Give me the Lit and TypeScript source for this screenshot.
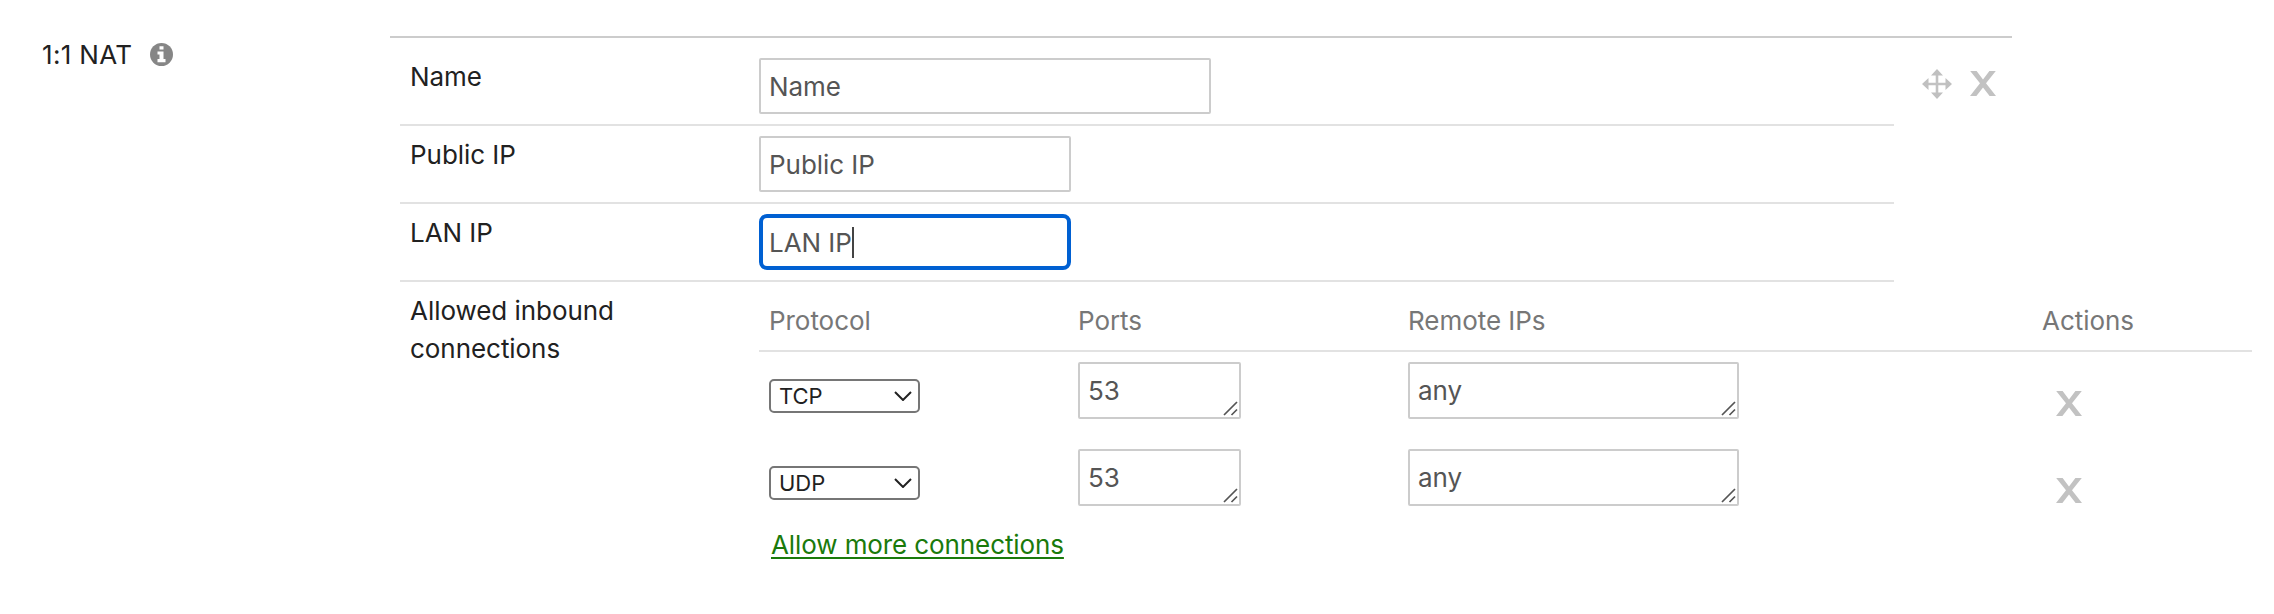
import { LitElement, html, css } from "lit";
import { customElement } from "lit/decorators.js";

const crossIcon = html`<svg class="cross" viewBox="0 0 26 27" width="26" height="27">
  <path d="M.2 1H6.600L13 9.600L19.400 1H25.800L16 13.300L26 26H19.600L13 17.400L6.400 26H0L10 13.300Z" fill="#c2c2c2" />
</svg>`;

const moveIcon = html`<svg class="move" viewBox="0 0 30 30" width="30" height="30">
  <path d="M15 3V27M3 15H27" stroke="#c2c2c2" stroke-width="2.600" fill="none" />
  <path d="M15 0L21 6.500H9ZM15 30L21 23.500H9ZM0 15L6.500 9V21ZM30 15L23.500 9V21Z" fill="#c0c0c0" />
</svg>`;

const grip = html`<svg class="grip" viewBox="0 0 16 16" width="16" height="16">
  <path d="M1 15L14 2M8.500 15L14 9.500" stroke="#555" stroke-width="1.700" fill="none" />
</svg>`;

@customElement("app-root")
export class AppRoot extends LitElement {
  static styles = css`
    :host {
      display: block;
      height: 614px;
      background: #fff;
      color: #212121;
      font: 26px/38px Inter, "Liberation Sans", sans-serif;
      letter-spacing: -0.05px;
      overflow: hidden;
    }
    * { box-sizing: border-box; }
    .page { display: flex; align-items: flex-start; padding-top: 36px; }
    .title {
      width: 390px;
      padding: 0 0 0 42px;
      display: flex;
      align-items: center;
      gap: 17px;
      letter-spacing: 0.35px;
    }
    .info { display: block; margin-top: -1px; }
    .rules { width: 1862px; }
    .top { width: 1622px; border-top: 2px solid #ccc; display: flex; }
    .fields { width: 1504px; padding-left: 10px; }
    .row {
      display: flex;
      height: 78px;
      border-bottom: 2px solid #e2e2e2;
      padding-left: 10px;
      align-items: flex-start;
    }
    .row.first { height: 88px; padding-top: 10px; }
    .label { width: 349px; padding-top: 10px; }
    .box {
      margin-top: 10px;
      height: 56px;
      border: 2px solid #ccc;
      border-radius: 2px;
      padding: 8px 8px 0;
      background: #fff;
      color: #555;
      white-space: nowrap;
      display: flex;
    }
    .wide { width: 452px; }
    .mid { width: 312px; }
    .focus { border: 4px solid #0060d2; border-radius: 8px; padding: 6px 6px 0; }
    .caret { width: 2px; height: 31px; margin-top: 3px; background: #444; }
    .tools { display: flex; gap: 18px; padding: 31px 0 0 28px; align-items: flex-start; }
    .cross, .move, .grip, .chev { display: block; }
    .tools .cross { margin-top: 1px; }
    .bottom { display: flex; padding-left: 20px; }
    .table { width: 1493px; }
    .line { display: grid; grid-template-columns: 309px 330px 634px 1fr; padding-left: 10px; }
    .head { height: 70px; padding-top: 20px; border-bottom: 2px solid #e2e2e2; color: #777; }
    .item { height: 87px; padding-top: 10px; }
    .select {
      width: 151px;
      height: 34px;
      margin-top: 17px;
      border: 2px solid #767676;
      border-radius: 5px;
      background: #fff;
      font-size: 22px;
      line-height: 30px;
      padding: 0 6px 0 8px;
      display: flex;
      justify-content: space-between;
      align-items: center;
    }
    .area { margin-top: 0; height: 57px; justify-content: space-between; align-items: flex-start; padding-right: 0; }
    .grip { align-self: flex-end; margin-bottom: 1px; }
    .ports { width: 163px; }
    .remote { width: 331px; }
    .item > .cross { margin: 28px 0 0 14px; }
    .more {
      display: inline-block;
      margin: 0 0 0 12px;
      color: #1a7a0b;
      letter-spacing: -0.1px;
      text-decoration: underline;
      text-decoration-thickness: 2px;
      text-underline-offset: 3px;
      text-decoration-skip-ink: none;
    }
  `;

  private item(protocol: string) {
    return html`<div class="line item">
      <div class="select">
        <span>${protocol}</span>
        <svg class="chev" viewBox="0 0 18 10" width="18" height="10">
          <path d="M1 1L9 9L17 1" fill="none" stroke="#222" stroke-width="2" />
        </svg>
      </div>
      <div class="box area ports"><span>53</span>${grip}</div>
      <div class="box area remote"><span>any</span>${grip}</div>
      ${crossIcon}
    </div>`;
  }

  render() {
    return html`<div class="page">
      <div class="title">
        <span>1:1 NAT</span>
        <svg class="info" viewBox="0 0 23 23" width="23" height="23">
          <circle cx="11.500" cy="11.500" r="11.500" fill="#868686" />
          <path d="M9.500 3.200H13.500V6.500H9.500ZM7.500 8.500H13.500V16H15.500V19.200H7.500V16H9.500V11.500H7.500Z" fill="#fff" />
        </svg>
      </div>
      <div class="rules">
        <div class="top">
          <div class="fields">
            <div class="row first"><div class="label">Name</div><div class="box wide">Name</div></div>
            <div class="row"><div class="label">Public IP</div><div class="box mid">Public IP</div></div>
            <div class="row"><div class="label">LAN IP</div><div class="box mid focus">LAN IP<span class="caret"></span></div></div>
          </div>
          <div class="tools">${moveIcon}${crossIcon}</div>
        </div>
        <div class="bottom">
          <div class="label">Allowed inbound<br />connections</div>
          <div class="table">
            <div class="line head"><span>Protocol</span><span>Ports</span><span>Remote IPs</span><span>Actions</span></div>
            ${this.item("TCP")}${this.item("UDP")}
            <a class="more">Allow more connections</a>
          </div>
        </div>
      </div>
    </div>`;
  }
}
